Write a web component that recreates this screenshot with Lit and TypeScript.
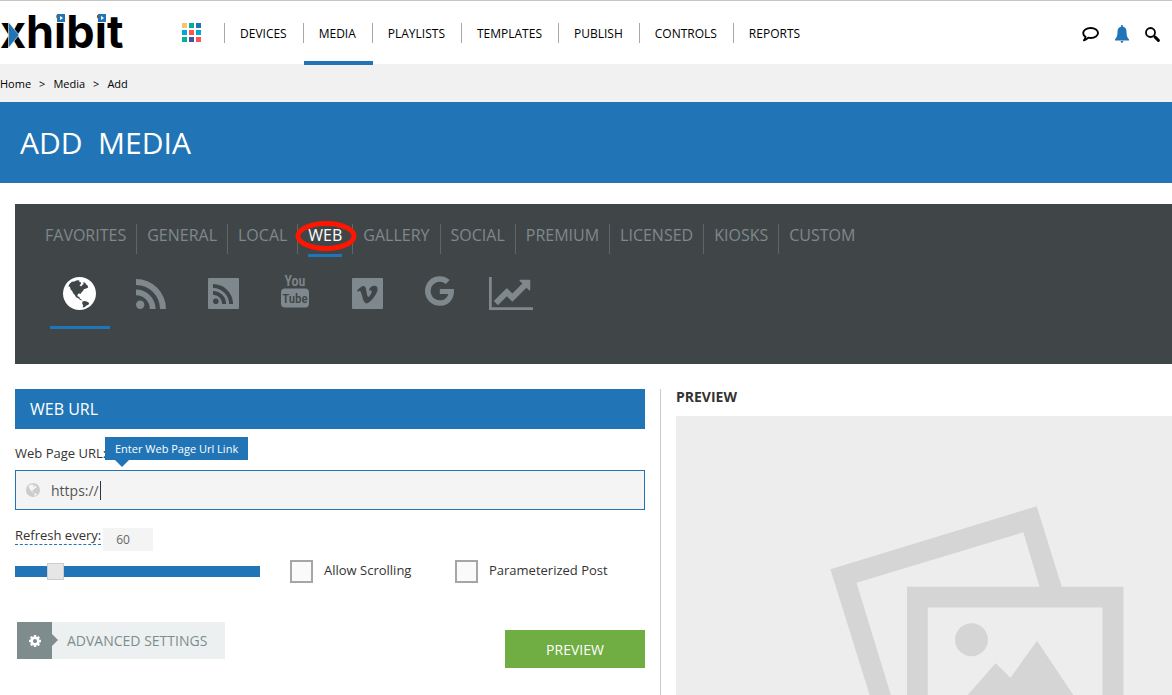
import { LitElement, html, css, svg, nothing } from "lit";
import { customElement, property, state } from "lit/decorators.js";
import { classMap } from "lit/directives/class-map.js";

const NAV = ["Devices", "Media", "Playlists", "Templates", "Publish", "Controls", "Reports"];
const TABS = ["Favorites", "General", "Local", "Web", "Gallery", "Social", "Premium", "Licensed", "Kiosks", "Custom"];
const SOURCES = [
  { id: "globe", label: "Web page" },
  { id: "rss", label: "RSS" },
  { id: "rss-square", label: "RSS ticker" },
  { id: "youtube", label: "YouTube" },
  { id: "vimeo", label: "Vimeo" },
  { id: "google", label: "Google" },
  { id: "chart", label: "Stocks" },
];

const rssShape = svg`
  <circle cx="4.2" cy="25.8" r="4.2"></circle>
  <path d="M0 10.4A19.6 19.6 0 0 1 19.6 30h-5.8A13.8 13.8 0 0 0 0 16.2z"></path>
  <path d="M0 0a30 30 0 0 1 30 30h-6A24 24 0 0 0 0 6z"></path>`;

const globeShape = svg`
  <path fill-rule="evenodd" d="M16.5 0a16.5 16.5 0 1 1 0 33a16.5 16.5 0 0 1 0-33z
    M5.4 9.6l1-2.6 2.4-2.2 2.4-.4 2.8-1.2 2.6.2-.6 1.4 1.6.2.4 2-1.6 1.2 2 1.4.6-1.6 1.4-.4 0-2.4 1.8.6 1 1.6 1.4 1.2.6 1.8-2 1.2-2.4.6-.6 1.6-1.8 1.6-.4 1.4-2.4-.2-1.2 1.4.2 1.6 1.6.2.6 1.6 1.6 1 1.2 1.2-2.4-.6-2-1.8-2.2-1-1.2-2.2-1.8-2-.8-2-1.6-1.6-.6-2.4-1-.6z
    M19.4 24.6l2.2-.6 2.2.6 2.4 1.4-.8 1.8-2 .8-1.4 1.4-2.4.4.6-2.2-1-1.4z"></path>`;

const ICONS: Record<string, { box: string; w: number; h: number; shape: unknown }> = {
  globe: { box: "0 0 33 33", w: 33, h: 33, shape: globeShape },
  rss: { box: "0 0 30 30", w: 30, h: 30, shape: rssShape },
  "rss-square": {
    box: "0 0 31 31", w: 31, h: 31,
    shape: svg`<rect width="31" height="31" rx="1"></rect>
      <g class="cut" transform="translate(5 6) scale(.67)">${rssShape}</g>`,
  },
  youtube: {
    box: "0 0 28 34", w: 28, h: 34,
    shape: svg`<text class="you" x="14" y="12.4" text-anchor="middle">You</text>
      <rect y="14.4" width="28" height="19" rx="4"></rect>
      <text class="tube cut" x="14" y="28.8" text-anchor="middle">Tube</text>`,
  },
  vimeo: {
    box: "0 0 31 31", w: 31, h: 31,
    shape: svg`<rect width="31" height="31" rx="1"></rect>
      <path class="cut" transform="translate(4 24.6) scale(.0126 -.0126)" d="M1709 1018q-10-236-332-651-333-431-562-431-142 0-240 263-44 160-132 482-72 262-157 262-18 0-127-76l-77 98q24 21 108 96.500t130 115.500q156 138 241 146 95 9 153-55.500t81-203.500q44-287 66-373 55-249 120-249 51 0 154 161 101 161 109 246 13 139-109 139-57 0-121-26 120 393 459 382 251-8 236-326z"></path>`,
  },
  google: {
    box: "128 128 1505 1536", w: 29, h: 30,
    shape: svg`<path d="M896 786h725q12 67 12 128 0 217-91 387.500t-259.500 266.500-386.500 96q-157 0-299-60.500t-245-163.500-163.500-245-60.500-299 60.500-299 163.500-245 245-163.500 299-60.500q300 0 515 201l-209 201q-123-119-306-119-129 0-238.500 65t-173.500 176.500-64 243.500 64 243.500 173.500 176.500 238.500 65q87 0 160-24t120-60 82-82 51.500-87 22.500-78h-436v-264z"></path>`,
  },
  chart: {
    box: "0 128 2048 1536", w: 44, h: 33,
    shape: svg`<path d="M2048 1536v128h-2048v-1536h128v1408h1920zm-128-1248v435q0 21-19.500 29.500t-35.500-7.500l-121-121-633 633q-10 10-23 10t-23-10l-233-233-416 416-192-192 585-585q10-10 23-10t23 10l233 233 464-464-121-121q-16-16-7.500-35.500t29.500-19.500h435q14 0 23 9t9 23z"></path>`,
  },
  comment: {
    box: "0 0 17 15", w: 17, h: 15,
    shape: svg`<path fill="none" stroke="currentColor" stroke-width="1.900" stroke-linejoin="round" d="M8.800 1c4.200 0 7.200 2.200 7.200 5s-3 5-7.200 5c-.9 0-1.700-.1-2.500-.3-1.200 1.400-2.500 2.200-4.300 2.700.8-1 1.400-2.100 1.500-3.600C2 8.900 1.200 7.500 1.200 6c0-2.800 3.200-5 7.600-5z"></path>`,
  },
  bell: {
    box: "0 0 14 18", w: 14, h: 18,
    shape: svg`<path d="M6.200 0h1.600v1.600c2.500.5 3.700 2.400 3.700 5 0 4 .7 6.200 2.500 7.600v1.300H0v-1.300c1.800-1.400 2.500-3.600 2.500-7.600 0-2.600 1.200-4.500 3.700-5zM5.700 16h2.600c0 1-.4 1.800-1.300 1.800S5.700 17 5.700 16z"></path>`,
  },
  search: {
    box: "0 0 15 15", w: 15, h: 15,
    shape: svg`<circle cx="5.500" cy="5.500" r="4.500" fill="none" stroke="currentColor" stroke-width="1.800"></circle>
      <path fill="none" stroke="currentColor" stroke-linecap="round" stroke-width="3" d="M10 10l3.400 3.400"></path>`,
  },
  cog: {
    box: "128 128 1536 1536", w: 12, h: 12,
    shape: svg`<path d="M1152 896q0-106-75-181t-181-75-181 75-75 181 75 181 181 75 181-75 75-181zm512-109v222q0 12-8 23t-20 13l-185 28q-19 54-39 91 35 50 107 138 10 12 10 25t-9 23q-27 37-99 108t-94 71q-12 0-26-9l-138-108q-44 23-91 38-16 136-29 186-7 28-36 28h-222q-14 0-24.500-8.500t-11.500-21.500l-28-184q-49-16-90-37l-141 107q-10 9-25 9-14 0-25-11-126-114-165-168-7-10-7-23 0-12 8-23 15-21 51-66.500t54-70.500q-27-50-41-99l-183-27q-13-2-21-12.500t-8-23.500v-222q0-12 8-23t19-13l186-28q14-46 39-92-40-57-107-138-10-12-10-24 0-10 9-23 26-36 98.500-107.500t94.500-71.500q13 0 26 10l138 107q44-23 91-38 16-136 29-186 7-28 36-28h222q14 0 24.500 8.500t11.500 21.500l28 184q49 16 90 37l142-107q9-9 24-9 13 0 25 10 129 119 165 170 7 8 7 22 0 12-8 23-15 21-51 66.500t-54 70.500q26 50 41 98l183 28q13 2 21 12.500t8 23.500z"></path>`,
  },
};

@customElement("app-icon")
class AppIcon extends LitElement {
  @property() name = "globe";
  @property({ type: Number }) size = 0;

  static styles = css`
    :host { display: inline-flex; }
    .glyph { display: block; fill: currentColor; overflow: visible; }
    .cut { fill: #404648; }
    .you, .tube { font-family: "Liberation Sans Narrow", "Roboto Condensed", "Open Sans Condensed", Roboto, sans-serif; }
    .you { font-size: 14px; font-weight: 500; }
    .tube { font-size: 13px; font-weight: 500; }
  `;

  render() {
    const icon = ICONS[this.name];
    return html`<svg class="glyph" aria-hidden="true" viewBox=${icon.box}
      width=${this.size || icon.w} height=${this.size || icon.h}>${icon.shape}</svg>`;
  }
}

@customElement("app-header")
class AppHeader extends LitElement {
  static styles = css`
    :host { display: block; }
    .bar { box-sizing: border-box; height: 64px; border-top: 1px solid #c8c4c0; display: flex; align-items: flex-start; background: #fff; }
    .logo { display: block; color: #000; }
    .logo svg { display: block; overflow: visible; }
    .word { font: 700 45px Inter, sans-serif; }
    .apps { margin: 22px 23px 0 60px; padding: 0; border: 0; background: none; display: grid; grid-template-columns: repeat(3, 5px); gap: 2px; }
    .dot { width: 5px; height: 5px; }
    .y { background: #f8c471; } .g { background: #00b09b; } .b { background: #2175b6; }
    .c { background: #00a9ce; } .r { background: #ff5252; } .p { background: #45529d; }
    .nav { display: flex; padding-top: 22px; }
    .item { display: flex; height: 42px; position: relative; padding-right: 16px; color: #000; text-decoration: none; font-size: 12px; line-height: 22px; text-transform: uppercase; }
    .item::before { content: ""; width: 1px; height: 20px; background: #a3a8ad; margin-right: 15px; }
    .on::after { content: ""; position: absolute; left: 1px; right: -1px; bottom: 0; height: 4px; background: #2175b6; }
    .tools { margin-left: auto; display: flex; align-items: center; gap: 16px; padding: 24px 12px 0 0; }
    .tool { display: flex; border: 0; padding: 0; background: none; color: #000; }
    .tool.alert { color: #2175b6; }
    .crumbs { height: 38px; background: #f1f1f1; display: flex; align-items: center; gap: 8px; font-size: 11px; line-height: 15px; color: #000; }
    .crumb { color: #000; text-decoration: none; }
  `;

  render() {
    return html`
      <header class="bar">
        <a class="logo" href="#" aria-label="xhibit home">
          <svg width="122" height="62" viewBox="0 0 122 62">
            <text class="word" x="0" y="47">xhibit</text>
            <path fill="#2175b6" stroke="#fff" stroke-width=".6" d="M8.500 21v26l10.500-13z"></path>
            <path fill="#fff" d="M56 10h10v4H56zM97 10h10v4H97z"></path>
            <rect x="57" y="13" width="8" height="8" fill="#2175b6"></rect>
            <path fill="#fff" d="M60 15v4l3-2z"></path>
            <rect x="98" y="13" width="8" height="8" fill="#2175b6"></rect>
            <path fill="#fff" d="M101 15v4l3-2z"></path>
          </svg>
        </a>
        <button class="apps" aria-label="Apps">
          ${["y", "g", "b", "c", "r", "c", "g", "p", "r"].map((c) => html`<span class="dot ${c}"></span>`)}
        </button>
        <nav class="nav">
          ${NAV.map((n) => html`<a href="#" class=${classMap({ item: true, on: n === "Media" })}>${n}</a>`)}
        </nav>
        <div class="tools">
          <button class="tool" aria-label="Messages"><app-icon name="comment"></app-icon></button>
          <button class="tool alert" aria-label="Alerts"><app-icon name="bell"></app-icon></button>
          <button class="tool" aria-label="Search"><app-icon name="search"></app-icon></button>
        </div>
      </header>
      <nav class="crumbs" aria-label="Breadcrumb">
        <a class="crumb" href="#">Home</a><span>&gt;</span>
        <a class="crumb" href="#">Media</a><span>&gt;</span>
        <span>Add</span>
      </nav>
    `;
  }
}

@customElement("media-sources")
class MediaSources extends LitElement {
  @state() tab = "Web";
  @state() source = "globe";

  static styles = css`
    :host { display: block; box-sizing: border-box; height: 160px; background: #404648; padding: 20px 20px 0; }
    button { border: 0; background: none; font: inherit; color: #7f888c; cursor: pointer; }
    .tabs { display: flex; height: 30px; }
    .tab { position: relative; padding: 0 10px; font-size: 16px; line-height: 22px; height: 30px; display: flex; text-transform: uppercase; border-right: 1px solid #5f6669; }
    .tab:last-child { border-right: 0; }
    .tab.on { color: #fff; }
    .tab.on::after { content: ""; position: absolute; left: 10px; right: 10px; bottom: -3px; height: 3px; background: #2175b6; }
    .ring { position: absolute; left: -3px; top: -3px; z-index: 1; }
    .sources { display: flex; gap: 12px; padding: 15px 0 0 15px; }
    .source { box-sizing: border-box; width: 60px; height: 60px; padding: 0 2px 8px 0; display: flex; align-items: center; justify-content: center; border-bottom: 3px solid transparent; }
    .source.on { color: #fff; border-bottom-color: #2175b6; }
    .source.high { padding-bottom: 14px; }
  `;

  render() {
    return html`
      <div class="tabs">
        ${TABS.map((t) => html`<button class=${classMap({ tab: true, on: t === this.tab })} @click=${() => (this.tab = t)}>
          ${t}${t === "Web" ? html`<svg class="ring" aria-hidden="true" width="62" height="30" viewBox="0 0 62 30">
            <ellipse cx="31" cy="15" rx="28" ry="12.500" fill="none" stroke="#ff1500" stroke-width="5"></ellipse></svg>` : nothing}
        </button>`)}
      </div>
      <div class="sources">
        ${SOURCES.map((s) => html`<button aria-label=${s.label}
          class=${classMap({ source: true, on: s.id === this.source, high: s.id === "google" || s.id === "youtube" })}
          @click=${() => (this.source = s.id)}><app-icon name=${s.id}></app-icon></button>`)}
      </div>
    `;
  }
}

@customElement("url-form")
class UrlForm extends LitElement {
  static styles = css`
    :host { display: block; color: #333; font-size: 13px; line-height: 18px; }
    .heading { margin: 0; padding: 0 15px; background: #2175b6; color: #fff; font-size: 16px; line-height: 40px; font-weight: 400; }
    .label-row { position: relative; display: flex; padding: 15px 0 8px; }
    .star { color: #f39c12; }
    .tip { position: absolute; left: 90px; top: 8px; padding: 0 10px; background: #2175b6; color: #fff; font-size: 11px; line-height: 23px; }
    .tip::after { content: ""; position: absolute; left: 10px; top: 100%; border: 7px solid transparent; border-top-color: #2175b6; border-bottom: 0; }
    .url { position: relative; display: flex; align-items: center; height: 40px; box-sizing: border-box; border: 1px solid #2175b6; background: #f4f4f4; }
    .url app-icon { color: #ccc; margin: 0 11px 0 10px; }
    .url-input { flex: 1; min-width: 0; border: 0; padding: 2px 0 0; outline: 0; background: none; color: #555; font: inherit; font-size: 14px; }
    .caret { position: absolute; left: 84px; width: 1px; height: 19px; background: #333; }
    .refresh { display: flex; align-items: flex-start; gap: 2px; padding-top: 17px; }
    .refresh-label { border-bottom: 1px dashed #2175b6; line-height: 17px; }
    .seconds { box-sizing: border-box; width: 50px; height: 23px; margin-top: 1px; border: 0; padding: 0 13px; background: #f4f4f4; color: #666; font: inherit; font-size: 12px; }
    .options { display: grid; grid-template-columns: 245px 135px 1fr; column-gap: 30px; align-items: center; padding-top: 9px; }
    .range { appearance: none; width: 100%; height: 11px; margin: 0; background: #2175b6; }
    .range::-webkit-slider-thumb { appearance: none; width: 17px; height: 17px; background: #e6e6e6; border: 1px solid #ccc; }
    .check { display: flex; gap: 11px; white-space: nowrap; line-height: 21px; }
    .box { appearance: none; flex: none; box-sizing: border-box; width: 23px; height: 23px; margin: 0; border: 2px solid #a6a6a6; background: #fafafa; }
    .actions { display: flex; justify-content: space-between; align-items: flex-start; padding: 39px 0 0 2px; }
    button { border: 0; padding: 0; font: inherit; font-size: 14px; cursor: pointer; }
    .advanced { display: flex; line-height: 37px; background: #ecf0f1; color: #7f8c8d; padding-right: 18px; }
    .cog { position: relative; width: 35px; height: 37px; margin-right: 15px; background: #7f8c8d; color: #fff; display: flex; align-items: center; justify-content: center; }
    .cog::after { content: ""; position: absolute; left: 100%; top: 12px; border: 6px solid transparent; border-left-color: #7f8c8d; border-right: 0; }
    .preview { margin-top: 8px; padding-top: 1px; width: 140px; line-height: 37px; background: #70ad43; color: #fff; }
  `;

  render() {
    return html`
      <h2 class="heading">WEB URL</h2>
      <div class="label-row">
        <label for="url">Web Page URL:<span class="star">*</span></label>
        <div class="tip" role="tooltip">Enter Web Page Url Link</div>
      </div>
      <div class="url">
        <app-icon name="globe" size="14"></app-icon>
        <input class="url-input" id="url" type="text" value="https://">
        <span class="caret"></span>
      </div>
      <div class="refresh">
        <label class="refresh-label" for="seconds">Refresh every:</label>
        <input class="seconds" id="seconds" type="text" value="60">
      </div>
      <div class="options">
        <input class="range" type="range" min="0" max="100" value="14" aria-label="Refresh interval">
        <label class="check"><input class="box" type="checkbox">Allow Scrolling</label>
        <label class="check"><input class="box" type="checkbox">Parameterized Post</label>
      </div>
      <div class="actions">
        <button class="advanced"><span class="cog"><app-icon name="cog"></app-icon></span>ADVANCED SETTINGS</button>
        <button class="preview">PREVIEW</button>
      </div>
    `;
  }
}

@customElement("app-root")
class AppRoot extends LitElement {
  static styles = css`
    :host { display: flex; flex-direction: column; height: 100vh; overflow: hidden; background: #fff; font-family: "Open Sans", "Noto Sans", sans-serif; }
    .title { margin: 0; padding: 0 20px; background: #2175b6; color: #fff; font-size: 30px; line-height: 81px; font-weight: 400; }
    media-sources { margin: 21px 0 0 15px; }
    .main { flex: 1; min-height: 0; display: flex; margin-top: 25px; padding-left: 15px; }
    url-form { flex: 0 0 630px; }
    .side { flex: 1; min-width: 0; margin-left: 15px; padding-left: 15px; border-left: 1px solid #ccc; display: flex; flex-direction: column; }
    .side-title { margin: 0 0 11px; font-size: 14px; line-height: 16px; font-weight: 700; color: #333; }
    .stage { flex: 1; min-height: 0; background: #ededed; overflow: hidden; }
    .art { display: block; }
  `;

  render() {
    return html`
      <app-header></app-header>
      <h1 class="title">ADD&nbsp; MEDIA</h1>
      <media-sources></media-sources>
      <main class="main">
        <url-form></url-form>
        <section class="side">
          <h2 class="side-title">PREVIEW</h2>
          <div class="stage">
            <svg class="art" aria-hidden="true" width="496" height="420" viewBox="0 0 496 420">
              <path fill="#d5d5d5" d="M154.400 153.300L360.700 90.300L429 309L219.800 363z"></path>
              <path fill="#ededed" d="M180.500 166.700L347.400 116.300L398 287L236 348z"></path>
              <path fill="#d5d5d5" d="M231 170.700H447.500V384H231z"></path>
              <path fill="#ededed" d="M251.800 191.500H426.500V363H251.800z"></path>
              <circle fill="#d5d5d5" cx="295.500" cy="223.700" r="16.500"></circle>
              <path fill="#d5d5d5" d="M267 307L319.600 247.300L334.500 261.700L361 224.700L416 307z"></path>
            </svg>
          </div>
        </section>
      </main>
    `;
  }
}
